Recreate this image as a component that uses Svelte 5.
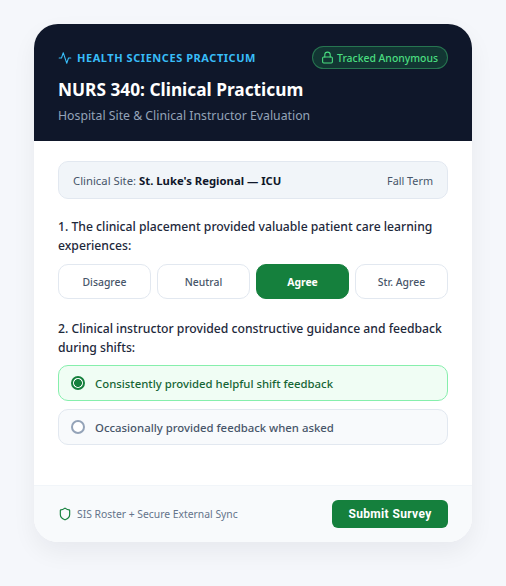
<script>
  const scale = ['Disagree', 'Neutral', 'Agree', 'Str. Agree'];
  const options = [
    { label: 'Consistently provided helpful shift feedback', on: true },
    { label: 'Occasionally provided feedback when asked', on: false }
  ];
</script>

<div class="page">
  <main class="card">
    <header class="head">
      <div class="top">
        <div class="eyebrow">
          <svg viewBox="0 0 24 24" width="14" height="14" fill="none" stroke="currentColor" stroke-width="1.8" stroke-linecap="round" stroke-linejoin="round"><path d="M22 12h-4l-3 9L9 3l-3 9H2"/></svg>
          <span>HEALTH SCIENCES PRACTICUM</span>
        </div>
        <div class="pill">
          <svg viewBox="0 0 24 24" width="13" height="13" fill="none" stroke="currentColor" stroke-width="2" stroke-linecap="round" stroke-linejoin="round"><rect x="3" y="11" width="18" height="11" rx="2"/><path d="M7 11V7a5 5 0 0 1 10 0v4"/></svg>
          <span>Tracked Anonymous</span>
        </div>
      </div>
      <h1>NURS 340: Clinical Practicum</h1>
      <p class="sub">Hospital Site &amp; Clinical Instructor Evaluation</p>
    </header>

    <section class="body">
      <div class="site">
        <span>Clinical Site: <strong>St. Luke's Regional — ICU</strong></span>
        <span class="term">Fall Term</span>
      </div>

      <div class="q q1">
        <div class="qt">1. The clinical placement provided valuable patient care learning experiences:</div>
        <div class="scale">
          {#each scale as s}
            <button class="opt" class:active={s === 'Agree'}>{s}</button>
          {/each}
        </div>
      </div>

      <div class="q">
        <div class="qt">2. Clinical instructor provided constructive guidance and feedback during shifts:</div>
        <div class="radios">
          {#each options as o}
            <div class="radio" class:on={o.on}>
              <span class="dot"></span>
              <span>{o.label}</span>
            </div>
          {/each}
        </div>
      </div>
    </section>

    <footer class="foot">
      <div class="sync">
        <svg viewBox="0 0 24 24" width="14" height="14" fill="none" stroke="#15803d" stroke-width="2" stroke-linecap="round" stroke-linejoin="round"><path d="M20 13c0 5-3.5 7.5-7.66 8.95a1 1 0 0 1-.67-.01C7.5 20.5 4 18 4 13V6a1 1 0 0 1 1-1c2 0 4.5-1.2 6.24-2.72a1.17 1.17 0 0 1 1.52 0C14.51 3.81 17 5 19 5a1 1 0 0 1 1 1z"/></svg>
        <span>SIS Roster + Secure External Sync</span>
      </div>
      <button class="submit">Submit Survey</button>
    </footer>
  </main>
</div>

<style>
  :global(body) {
    margin: 0;
    background: #f5f7fb;
    font-family: "Noto Sans", sans-serif;
  }
  .page {
    min-height: 586px;
    box-sizing: border-box;
    padding: 24px 34px 44px;
  }
  .card {
    height: 518px;
    display: flex;
    flex-direction: column;
    background: #fff;
    border-radius: 24px;
    overflow: hidden;
    box-shadow: 0 10px 25px rgba(15, 23, 42, 0.06);
  }
  .head {
    height: 117px;
    box-sizing: border-box;
    padding: 22px 24px 0;
    background: #0f172a;
  }
  .top {
    display: flex;
    justify-content: space-between;
    align-items: center;
    height: 23px;
  }
  .eyebrow {
    display: flex;
    align-items: center;
    gap: 5px;
    color: #38bdf8;
    font-size: 11px;
    font-weight: 700;
    letter-spacing: 0.55px;
  }
  .pill {
    display: flex;
    align-items: center;
    gap: 3px;
    height: 23px;
    box-sizing: border-box;
    padding: 0 9px 0 8px;
    border: 1px solid rgba(74, 222, 128, 0.38);
    border-radius: 12px;
    background: rgba(34, 197, 94, 0.18);
    color: #4ade80;
    font-size: 10.4px;
    font-weight: 500;
  }
  h1 {
    margin: 8px 0 0;
    color: #fff;
    font-size: 17.3px;
    line-height: 26px;
    font-weight: 700;
  }
  .sub {
    margin: 5px 0 0;
    color: #94a3b8;
    font-size: 12.27px;
    line-height: 16px;
  }
  .body {
    flex: 1;
    padding: 20px 24px 0;
  }
  .site {
    display: flex;
    justify-content: space-between;
    align-items: center;
    height: 38px;
    box-sizing: border-box;
    padding: 0 14px;
    background: #f1f5f9;
    border: 1px solid #e2e8f0;
    border-radius: 10px;
    color: #475569;
    font-size: 11.3px;
  }
  .site strong {
    color: #0f172a;
    font-weight: 700;
  }
  .term {
    font-size: 10.8px;
  }
  .q1 {
    margin: 18px 0 20px;
  }
  .qt {
    color: #1e293b;
    font-size: 12.2px;
    font-weight: 500;
    line-height: 19px;
  }
  .scale {
    display: grid;
    grid-template-columns: repeat(4, 1fr);
    gap: 6px;
    margin-top: 9px;
  }
  .opt {
    height: 35px;
    padding: 0;
    background: #fff;
    border: 1px solid #e2e8f0;
    border-radius: 10px;
    color: #475569;
    font: 500 10.4px "Noto Sans", sans-serif;
  }
  .opt.active {
    background: #15803d;
    border-color: #15803d;
    color: #fff;
    font-weight: 700;
  }
  .radios {
    display: flex;
    flex-direction: column;
    gap: 8px;
    margin-top: 8px;
  }
  .radio {
    display: flex;
    align-items: center;
    gap: 10px;
    height: 36px;
    box-sizing: border-box;
    padding: 0 12px;
    background: #f8fafc;
    border: 1px solid #e2e8f0;
    border-radius: 10px;
    color: #475569;
    font-size: 11.35px;
    font-weight: 500;
  }
  .radio.on {
    background: #f0fdf4;
    border-color: #86efac;
    color: #166534;
  }
  .dot {
    width: 14px;
    height: 14px;
    box-sizing: border-box;
    flex: none;
    border: 2px solid #94a3b8;
    border-radius: 50%;
    background: #fff;
  }
  .on .dot {
    border-color: #15803d;
    background: radial-gradient(circle, #15803d 0 3.6px, #fff 4.2px);
  }
  .foot {
    display: flex;
    justify-content: space-between;
    align-items: center;
    height: 57px;
    box-sizing: border-box;
    padding: 0 24px;
    background: #f8fafc;
    border-top: 1px solid #f1f5f9;
  }
  .sync {
    display: flex;
    align-items: center;
    gap: 5px;
    color: #64748b;
    font-size: 10.35px;
  }
  .submit {
    width: 116px;
    height: 28px;
    padding: 0;
    border: 0;
    border-radius: 6px;
    background: #15803d;
    color: #fff;
    font: 700 12px Roboto, sans-serif;
    letter-spacing: 0.36px;
  }
</style>
